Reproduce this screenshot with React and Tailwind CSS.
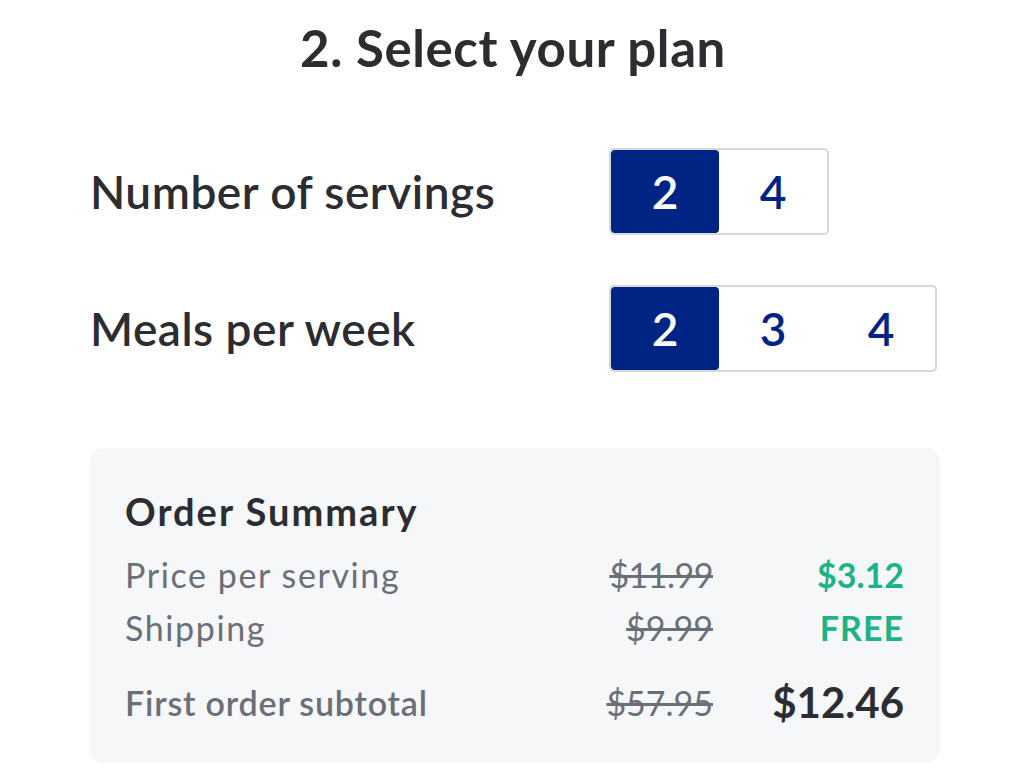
export default function App() {
  const font = { fontFamily: "Lato, 'Noto Sans', sans-serif" };
  const Seg = ({ items, sel }) => (
    <div className="flex shrink-0 rounded-[5px] border-2 border-[#d6d8dc] bg-white">
      {items.map((n) => (
        <div
          key={n}
          className={
            "flex h-[83px] w-[108px] items-center justify-center text-[46px] font-semibold " +
            (n === sel ? "rounded-[4px] bg-[#002484] text-white" : "text-[#002484]")
          }
        >
          {n}
        </div>
      ))}
    </div>
  );
  return (
    <div className="h-[776px] w-[1026px] bg-white text-[#2b2d31]" style={font}>
      <h1 className="pt-[18px] text-center text-[51px] font-bold leading-[60px] tracking-[0.6px]">2. Select your plan</h1>
      <div className="mt-[70px] flex flex-col gap-[50px] px-[90px]">
        <div className="flex items-center">
          <div className="w-[519px] shrink-0 text-[46px] font-semibold tracking-[0.5px]">Number of servings</div>
          <Seg items={[2, 4]} sel={2} />
        </div>
        <div className="flex items-center">
          <div className="w-[519px] shrink-0 text-[46px] font-semibold tracking-[0.5px]">Meals per week</div>
          <Seg items={[2, 3, 4]} sel={2} />
        </div>
      </div>
      <div className="ml-[90px] mt-[76px] h-[315px] w-[850px] rounded-[14px] bg-[#f6f7f9] pl-[35px] pr-[36px] pt-[41px]">
        <div className="text-[38px] font-bold leading-[44px] tracking-[2px]">Order Summary</div>
        <div className="mt-[15px] flex flex-col">
          <div className="flex h-[53px] items-center text-[34px] text-[#6b6f77]">
            <div className="flex-1 tracking-[1.6px]">Price per serving</div>
            <div className="text-right tracking-[-0.5px] line-through">$11.99</div>
            <div className="w-[191px] text-right font-bold text-[#1db386]">$3.12</div>
          </div>
          <div className="flex h-[53px] items-center text-[34px] text-[#6b6f77]">
            <div className="flex-1 tracking-[1.6px]">Shipping</div>
            <div className="text-right line-through">$9.99</div>
            <div className="w-[191px] text-right font-bold tracking-[1px] text-[#1db386]">FREE</div>
          </div>
          <div className="mt-[20px] flex h-[56px] items-center text-[34px] text-[#6b6f77]">
            <div className="flex-1 font-semibold tracking-[0.8px]">First order subtotal</div>
            <div className="text-right line-through">$57.95</div>
            <div className="w-[191px] text-right text-[42px] font-bold text-[#2b2d31]">$12.46</div>
          </div>
        </div>
      </div>
    </div>
  );
}
